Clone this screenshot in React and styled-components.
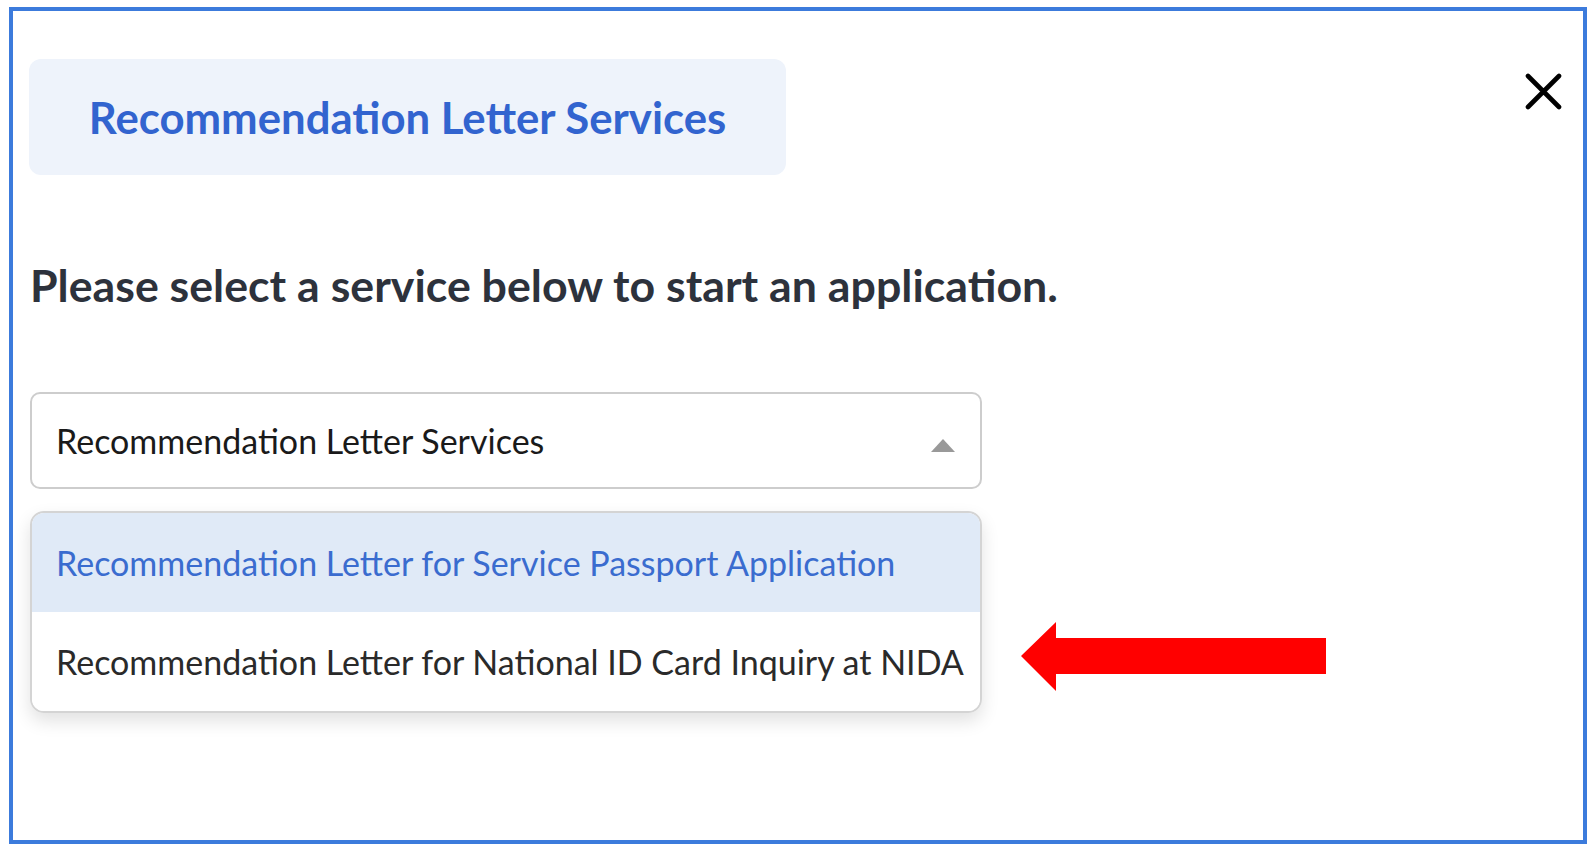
import styled, { createGlobalStyle } from "styled-components";

const GlobalStyle = createGlobalStyle`
  html, body {
    margin: 0;
    padding: 0;
    background: #ffffff;
  }
  body {
    font-family: Lato, "Open Sans", "Noto Sans", sans-serif;
  }
`;

const services = [
  { label: "Recommendation Letter for Service Passport Application", active: true },
  { label: "Recommendation Letter for National ID Card Inquiry at NIDA", active: false },
];

const App = () => {
  return (
    <>
      <GlobalStyle />
      <Frame>
        <TopRow>
          <TitleBox>Recommendation Letter Services</TitleBox>
          <CloseButton aria-label="close">
            <svg width="37" height="37" viewBox="0 0 37 37">
              <path
                d="M3 3 L34 34 M34 3 L3 34"
                stroke="#000"
                strokeWidth="4.6"
                strokeLinecap="round"
              />
            </svg>
          </CloseButton>
        </TopRow>
        <Heading>Please select a service below to start an application.</Heading>
        <SelectBox>
          <span>Recommendation Letter Services</span>
          <Caret />
        </SelectBox>
        <MenuRow>
          <Menu>
            {services.map((s) => (
              <Option key={s.label} $active={s.active}>
                {s.label}
              </Option>
            ))}
          </Menu>
          <Pointer width="306" height="70" viewBox="0 0 306 70">
            <polygon points="0,34 35,0 35,16 305,16 305,52 35,52 35,69" fill="#ff0000" />
          </Pointer>
        </MenuRow>
      </Frame>
    </>
  );
};

export default App;

const Frame = styled.main`
  box-sizing: border-box;
  margin: 7px 0 0 9px;
  width: 1578px;
  height: 837px;
  border: 4px solid #3c7bdc;
  padding: 48px 21px 0 16px;
  display: flex;
  flex-direction: column;
`;

const TopRow = styled.div`
  display: flex;
  justify-content: space-between;
  align-items: flex-start;
`;

const TitleBox = styled.div`
  box-sizing: border-box;
  width: 757px;
  height: 116px;
  background: #eef3fb;
  border-radius: 12px;
  display: flex;
  align-items: center;
  justify-content: center;
  color: #3264cf;
  font-size: 43.7px;
  font-weight: 700;
`;

const CloseButton = styled.button`
  border: none;
  background: transparent;
  padding: 0;
  margin-top: 14px;
  width: 37px;
  height: 37px;
  cursor: pointer;
  display: flex;
`;

const Heading = styled.h2`
  margin: 84px 0 0 1px;
  font-size: 44.7px;
  font-weight: 700;
  color: #2d323c;
  line-height: 52px;
`;

const SelectBox = styled.div`
  box-sizing: border-box;
  margin-top: 81px;
  margin-left: 1px;
  width: 952px;
  height: 97px;
  border: 2px solid #cdcdcd;
  border-radius: 10px;
  padding: 0 25px 0 24px;
  display: flex;
  align-items: center;
  justify-content: space-between;
  font-size: 34px;
  color: #1a1a1a;
`;

const Caret = styled.span`
  width: 0;
  height: 0;
  border-left: 12px solid transparent;
  border-right: 12px solid transparent;
  border-bottom: 13px solid #999999;
  margin-top: 10px;
`;

const MenuRow = styled.div`
  display: flex;
  align-items: flex-end;
  gap: 39px;
  margin-top: 22px;
  margin-left: 1px;
`;

const Menu = styled.ul`
  box-sizing: border-box;
  list-style: none;
  margin: 0;
  padding: 0;
  width: 952px;
  border: 2px solid #d4d4d4;
  border-radius: 14px;
  overflow: hidden;
  box-shadow: 0 8px 18px rgba(0, 0, 0, 0.12);
`;

const Option = styled.li`
  height: 99px;
  display: flex;
  align-items: center;
  padding-left: 24px;
  font-size: 34px;
  background: ${(p) => (p.$active ? "#e0eaf7" : "#ffffff")};
  color: ${(p) => (p.$active ? "#3a6ccf" : "#2a2a2a")};
`;

const Pointer = styled.svg`
  display: block;
  margin-bottom: 21px;
`;
